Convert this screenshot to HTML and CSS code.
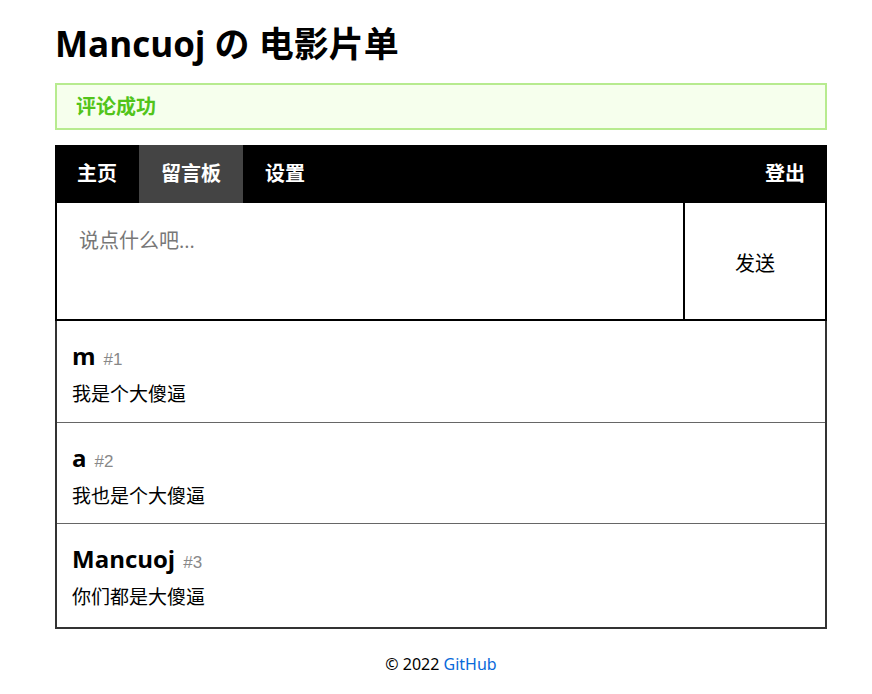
FILE: index.html
```html
<!DOCTYPE html>
<html lang="zh-CN">
<head>
<meta charset="utf-8">
<title>Mancuoj の 电影片单</title>
<link rel="stylesheet" href="styles.css">
</head>
<body>
<div class="page">
  <h1 class="title">Mancuoj の 电影片单</h1>
  <div class="alert">评论成功</div>
  <nav class="nav">
    <div class="nav-left">
      <a class="nav-item" href="#">主页</a>
      <a class="nav-item active" href="#">留言板</a>
      <a class="nav-item" href="#">设置</a>
    </div>
    <a class="nav-item" href="#">登出</a>
  </nav>
  <form class="form">
    <textarea class="input" placeholder="说点什么吧..."></textarea>
    <button class="send" type="button">发送</button>
  </form>
  <ul class="comments">
    <li class="comment">
      <div class="head"><span class="name">m</span><span class="num">#1</span></div>
      <p class="text">我是个大傻逼</p>
    </li>
    <li class="comment">
      <div class="head"><span class="name">a</span><span class="num">#2</span></div>
      <p class="text">我也是个大傻逼</p>
    </li>
    <li class="comment">
      <div class="head"><span class="name">Mancuoj</span><span class="num">#3</span></div>
      <p class="text">你们都是大傻逼</p>
    </li>
  </ul>
  <footer class="footer">© 2022 <a class="gh" href="#">GitHub</a></footer>
</div>
</body>
</html>
```

FILE: styles.css
```css
* { box-sizing: border-box; }
body {
  margin: 0;
  background: #fff;
  color: #000;
  font-family: "Open Sans", "Noto Sans CJK SC", sans-serif;
}
.page {
  width: 772px;
  margin-left: 55px;
}
.title {
  margin: 23px 0 18px;
  height: 42px;
  font-size: 35px;
  line-height: 42px;
  font-weight: 700;
}
.alert {
  height: 47px;
  border: 2px solid #b7eb8f;
  background: #f6ffed;
  color: #52c41a;
  font-size: 20px;
  font-weight: 700;
  line-height: 43px;
  padding: 0 19px;
  margin-bottom: 15px;
}
.nav {
  display: flex;
  justify-content: space-between;
  background: #000;
  height: 58px;
}
.nav-left { display: flex; }
.nav-item {
  display: block;
  padding: 0 22px;
  line-height: 58px;
  color: #fff;
  text-decoration: none;
  font-size: 20px;
  font-weight: 700;
}
.nav-item.active { background: #444; }
.form {
  display: flex;
  height: 118px;
  border: 2px solid #000;
  border-top: none;
}
.input {
  flex: 1;
  border: none;
  border-right: 2px solid #000;
  resize: none;
  outline: none;
  padding: 23px 22px 0;
  font-family: "Open Sans", "Noto Sans CJK SC", sans-serif;
  font-size: 20px;
  line-height: 30px;
}
.input::placeholder { color: #777; }
.send {
  width: 140px;
  border: none;
  background: #fff;
  font-family: "Open Sans", "Noto Sans CJK SC", sans-serif;
  font-size: 20px;
  color: #000;
  padding: 2px 0 0;
}
.comments {
  list-style: none;
  margin: 0;
  padding: 0;
  border: 2px solid #333;
  border-top: none;
}
.comment {
  height: 102px;
  padding: 19px 15px 0;
  border-bottom: 1px solid #666;
}
.comment:nth-child(2) { height: 101px; }
.comment:last-child {
  height: 103px;
  border-bottom: none;
}
.head {
  display: flex;
  align-items: baseline;
  height: 32px;
  line-height: 32px;
}
.name {
  font-size: 24px;
  font-weight: 700;
}
.num {
  margin-left: 8px;
  font-family: "Liberation Sans", Arial, sans-serif;
  font-size: 17px;
  color: #888;
}
.text {
  margin: 7px 0 0;
  height: 30px;
  font-size: 19px;
  line-height: 30px;
}
.footer {
  text-align: center;
  margin-top: 25px;
  font-family: "Noto Sans", sans-serif;
  font-size: 16px;
  line-height: 20px;
}
.gh {
  color: #0969da;
  text-decoration: none;
}
```
